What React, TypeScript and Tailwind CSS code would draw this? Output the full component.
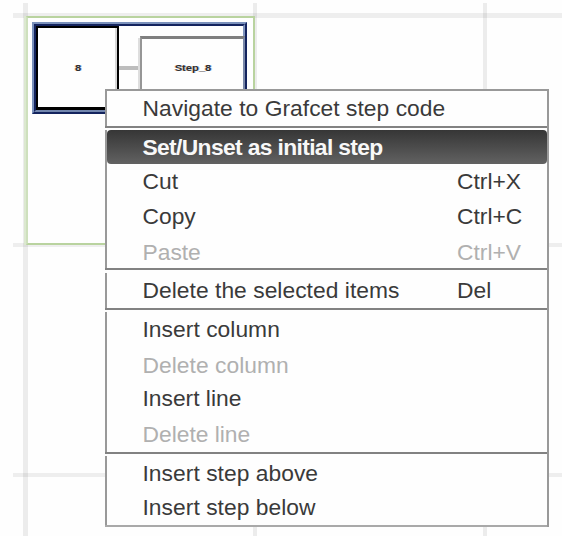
type Item = {
  label: string;
  shortcut?: string;
  size: string;
  spacing?: string;
  disabled?: boolean;
  active?: boolean;
};

const sections: { gap: string; line: string; items: Item[] }[] = [
  {
    gap: "pt-0",
    line: "border-b-[#828282]",
    items: [
      { label: "Navigate to Grafcet step code", size: "h-[35px]", spacing: "tracking-[0.04px]" },
    ],
  },
  {
    gap: "pt-[2px]",
    line: "border-b-[#828282]",
    items: [
      { label: "Set/Unset as initial step", size: "h-[34px]", spacing: "tracking-[-0.63px]", active: true },
      { label: "Cut", shortcut: "Ctrl+X", size: "h-[34px]" },
      { label: "Copy", shortcut: "Ctrl+C", size: "h-[36px]" },
      { label: "Paste", shortcut: "Ctrl+V", size: "h-[34px] pt-[2px]", disabled: true },
    ],
  },
  {
    gap: "pt-[3px]",
    line: "border-b-[#828282]",
    items: [
      { label: "Delete the selected items", shortcut: "Del", size: "h-[35px]", spacing: "tracking-[0.04px]" },
    ],
  },
  {
    gap: "pt-[2px]",
    line: "border-b-[#828282]",
    items: [
      { label: "Insert column", size: "h-[35px]", spacing: "tracking-[0.04px]" },
      { label: "Delete column", size: "h-[36px]", spacing: "tracking-[0.04px]", disabled: true },
      { label: "Insert line", size: "h-[31px]" },
      { label: "Delete line", size: "h-[38px] pt-[2px]", disabled: true },
    ],
  },
  {
    gap: "pt-[2px]",
    line: "border-b-[#a9a9a9]",
    items: [
      { label: "Insert step above", size: "h-[34px]", spacing: "tracking-[0.04px]" },
      { label: "Insert step below", size: "h-[35px]", spacing: "tracking-[0.04px]" },
    ],
  },
];

function MenuRow({ item }: { item: Item }) {
  const tone = item.active
    ? "rounded-[4px] bg-linear-to-b from-[#363636] to-[#626262] font-bold text-[#f8f8f8]"
    : item.disabled
      ? "text-[#b0b0b0]"
      : "text-[#3a3a3a]";
  return (
    <div className={`flex items-center pl-[35.5px] ${item.size} ${item.spacing ?? ""} ${tone}`}>
      <span className="w-[314.5px]">{item.label}</span>
      {item.shortcut && <span>{item.shortcut}</span>}
    </div>
  );
}

function ContextMenu() {
  return (
    <div className="absolute left-[105px] top-[89px] flex w-[444px] flex-col border-t-2 border-r-2 border-[#999999] bg-[#fefefe] text-[22.8px] leading-none whitespace-nowrap">
      {sections.map((section, i) => (
        <div key={i} className={section.gap}>
          <div className={`flex flex-col border-b-2 ${section.line}`}>
            <div className="flex flex-col border-l-2 border-[#999999]">
              {section.items.map((item) => (
                <MenuRow key={item.label} item={item} />
              ))}
            </div>
          </div>
        </div>
      ))}
    </div>
  );
}

function StepText({ text }: { text: string }) {
  return (
    <span
      className="h-[10px] scale-y-[0.85] text-[11.2px] leading-[10px] font-bold text-[#303030]"
      style={{ textShadow: "-1px 0 #f6bd8c99, 1px 0 #79aef099" }}
    >
      {text}
    </span>
  );
}

function SelectedStep() {
  return (
    <div className="h-[92px] w-[215px] border-2 border-t-[#7b91bb] border-r-[#14245e] border-b-[#14245e] border-l-[#7b91bb]">
      <div className="flex h-[88px] items-start border-2 border-t-[#14245e] border-r-[#8195bd] border-b-[#7286ad] border-l-[#14245e] bg-[#fefefe]">
        <div className="h-[84px] w-[83px] shrink-0 border-2 border-b-[3px] border-black">
          <div className="flex h-full items-center justify-center border-r-2 border-[#d6d6d6] pt-px pl-[3px]">
            <StepText text="8" />
          </div>
        </div>
        <div className="mt-[40px] h-[4px] w-[19px] shrink-0 bg-[#bdbdbd]" />
        <div className="mt-[12px] h-[72px] w-[2px] shrink-0 bg-[#dedede]" />
        <div className="mt-[10px] -mr-[2px] flex h-[74px] grow justify-center border-x-2 border-t-[3px] border-t-[#7f7f7f] border-r-[#7b89a9] border-l-[#969696] pt-[24px] pl-px">
          <StepText text="Step_8" />
        </div>
      </div>
    </div>
  );
}

function GrafcetCanvas() {
  return (
    <div className="grid h-full w-full">
      <div className="col-start-1 row-start-1 flex flex-col gap-[225px] pt-[13px] pl-[13px]">
        <div className="h-[5px] bg-[#eeeeee]" />
        <div className="h-[4px] bg-[#eeeeee]" />
        <div className="mt-px h-[4px] bg-[#eeeeee]" />
      </div>
      <div className="col-start-1 row-start-1 flex gap-[225px] pt-[3px] pl-[23px]">
        <div className="w-[5px] shrink-0 bg-black/7" />
        <div className="w-[4px] shrink-0 bg-black/7" />
        <div className="ml-px w-[4px] shrink-0 bg-black/7" />
      </div>
      <div className="col-start-1 row-start-1 pt-[16px] pl-[24px]">
        <div className="h-[229px] w-[231px] border-l-2 border-[#dce8d0]">
          <div className="h-full border-2 border-[#b9d39f] border-l-[#cee0bd] p-[4px]">
            <SelectedStep />
          </div>
        </div>
      </div>
    </div>
  );
}

export default function App() {
  return (
    <div className="relative h-[536px] w-[562px] overflow-hidden bg-[#fefefe] font-['Liberation_Sans',Arial,sans-serif]">
      <GrafcetCanvas />
      <ContextMenu />
    </div>
  );
}
